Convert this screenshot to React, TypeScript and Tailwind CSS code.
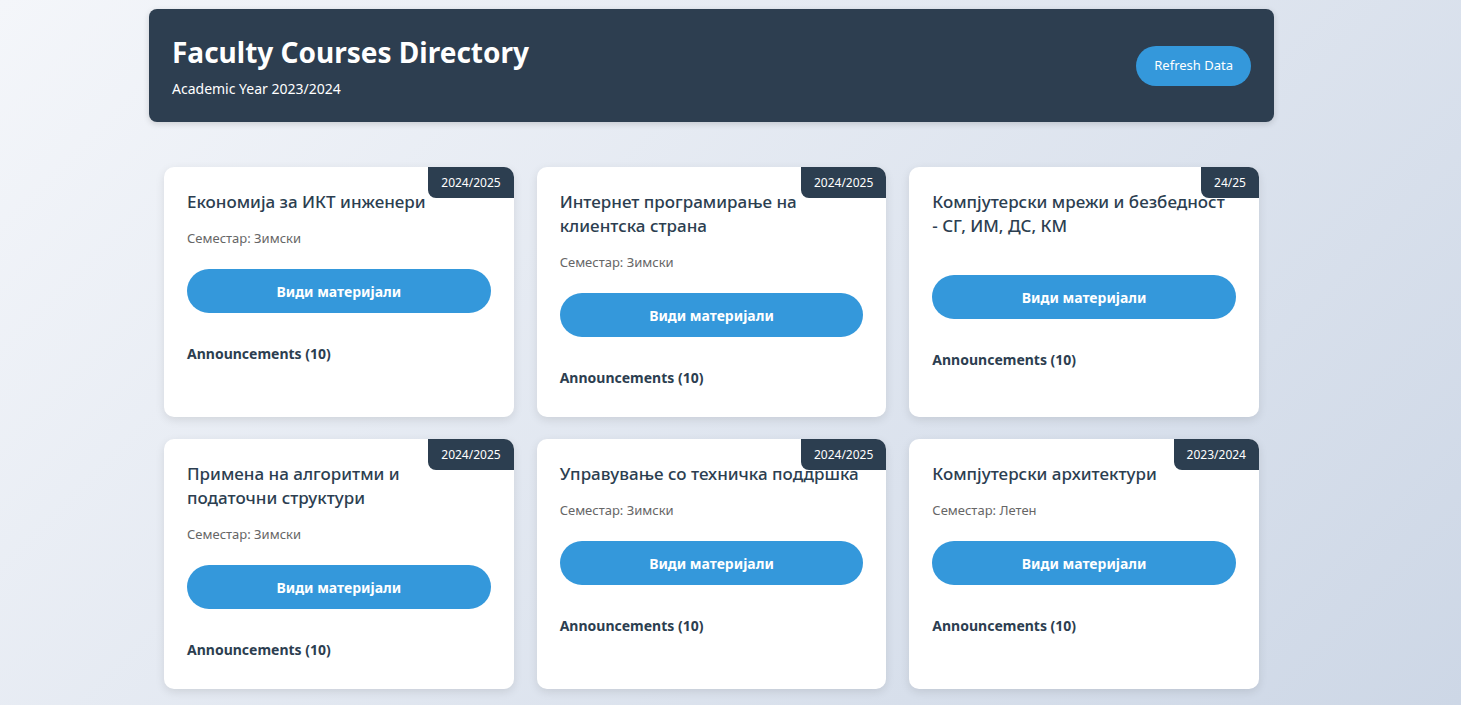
import React from "react";

type Course = { title: string; year: string; semester?: string };

const courses: Course[] = [
  { title: "Економија за ИКТ инженери", year: "2024/2025", semester: "Зимски" },
  { title: "Интернет програмирање на клиентска страна", year: "2024/2025", semester: "Зимски" },
  { title: "Компјутерски мрежи и безбедност - СГ, ИМ, ДС, КМ", year: "24/25" },
  { title: "Примена на алгоритми и податочни структури", year: "2024/2025", semester: "Зимски" },
  { title: "Управување со техничка поддршка", year: "2024/2025", semester: "Зимски" },
  { title: "Компјутерски архитектури", year: "2023/2024", semester: "Летен" },
];

function Card({ c }: { c: Course }) {
  return (
    <div className="relative bg-white rounded-[10px] shadow-[0_3px_10px_rgba(0,0,0,0.1)] px-[23px] pt-[23px] pb-[28px] overflow-hidden">
      <div className="absolute top-0 right-0 bg-[#2c3e50] text-white text-[12px] leading-[31px] h-[31px] px-[13px] rounded-bl-[8px]">
        {c.year}
      </div>
      <h3 className="text-[17px] leading-[24px] font-medium text-[#2c3e50] pr-[4px]">{c.title}</h3>
      {c.semester ? (
        <p className="mt-[14px] text-[13px] leading-[20px] text-[#666]">Семестар: {c.semester}</p>
      ) : (
        <div className="h-[16px]" />
      )}
      <button className="mt-[21px] w-full h-[44px] rounded-full bg-[#3498db] text-white text-[14px] font-bold">
        Види материјали
      </button>
      <div className="mt-[30px] text-[14px] leading-[22px] font-bold text-[#2c3e50]">Announcements (10)</div>
    </div>
  );
}

export default function App() {
  return (
    <div
      className="min-h-screen w-full bg-[linear-gradient(135deg,#f4f6fa_0%,#cdd7e6_100%)] text-[#2c3e50]"
      style={{ fontFamily: '"Noto Sans", "Open Sans", sans-serif' }}
    >
      <div className="ml-[149px] w-[1125px] pt-[9px] pb-[16px]">
        <header className="h-[113px] bg-[#2d3e50] rounded-[8px] shadow-[0_2px_6px_rgba(0,0,0,0.15)] flex items-center justify-between px-[23px]">
          <div className="flex flex-col">
            <h1 className="text-[28px] leading-[36px] font-bold text-white mt-[2px]">Faculty Courses Directory</h1>
            <p className="text-[14px] leading-[20px] text-white mt-[9px]">Academic Year 2023/2024</p>
          </div>
          <button className="h-[40px] px-[18px] rounded-full bg-[#3498db] text-white text-[13px]">Refresh Data</button>
        </header>
        <main className="grid grid-cols-3 gap-x-[23px] gap-y-[22px] px-[15px] mt-[45px]">
          {courses.map((c, i) => (
            <Card key={i} c={c} />
          ))}
        </main>
      </div>
    </div>
  );
}
